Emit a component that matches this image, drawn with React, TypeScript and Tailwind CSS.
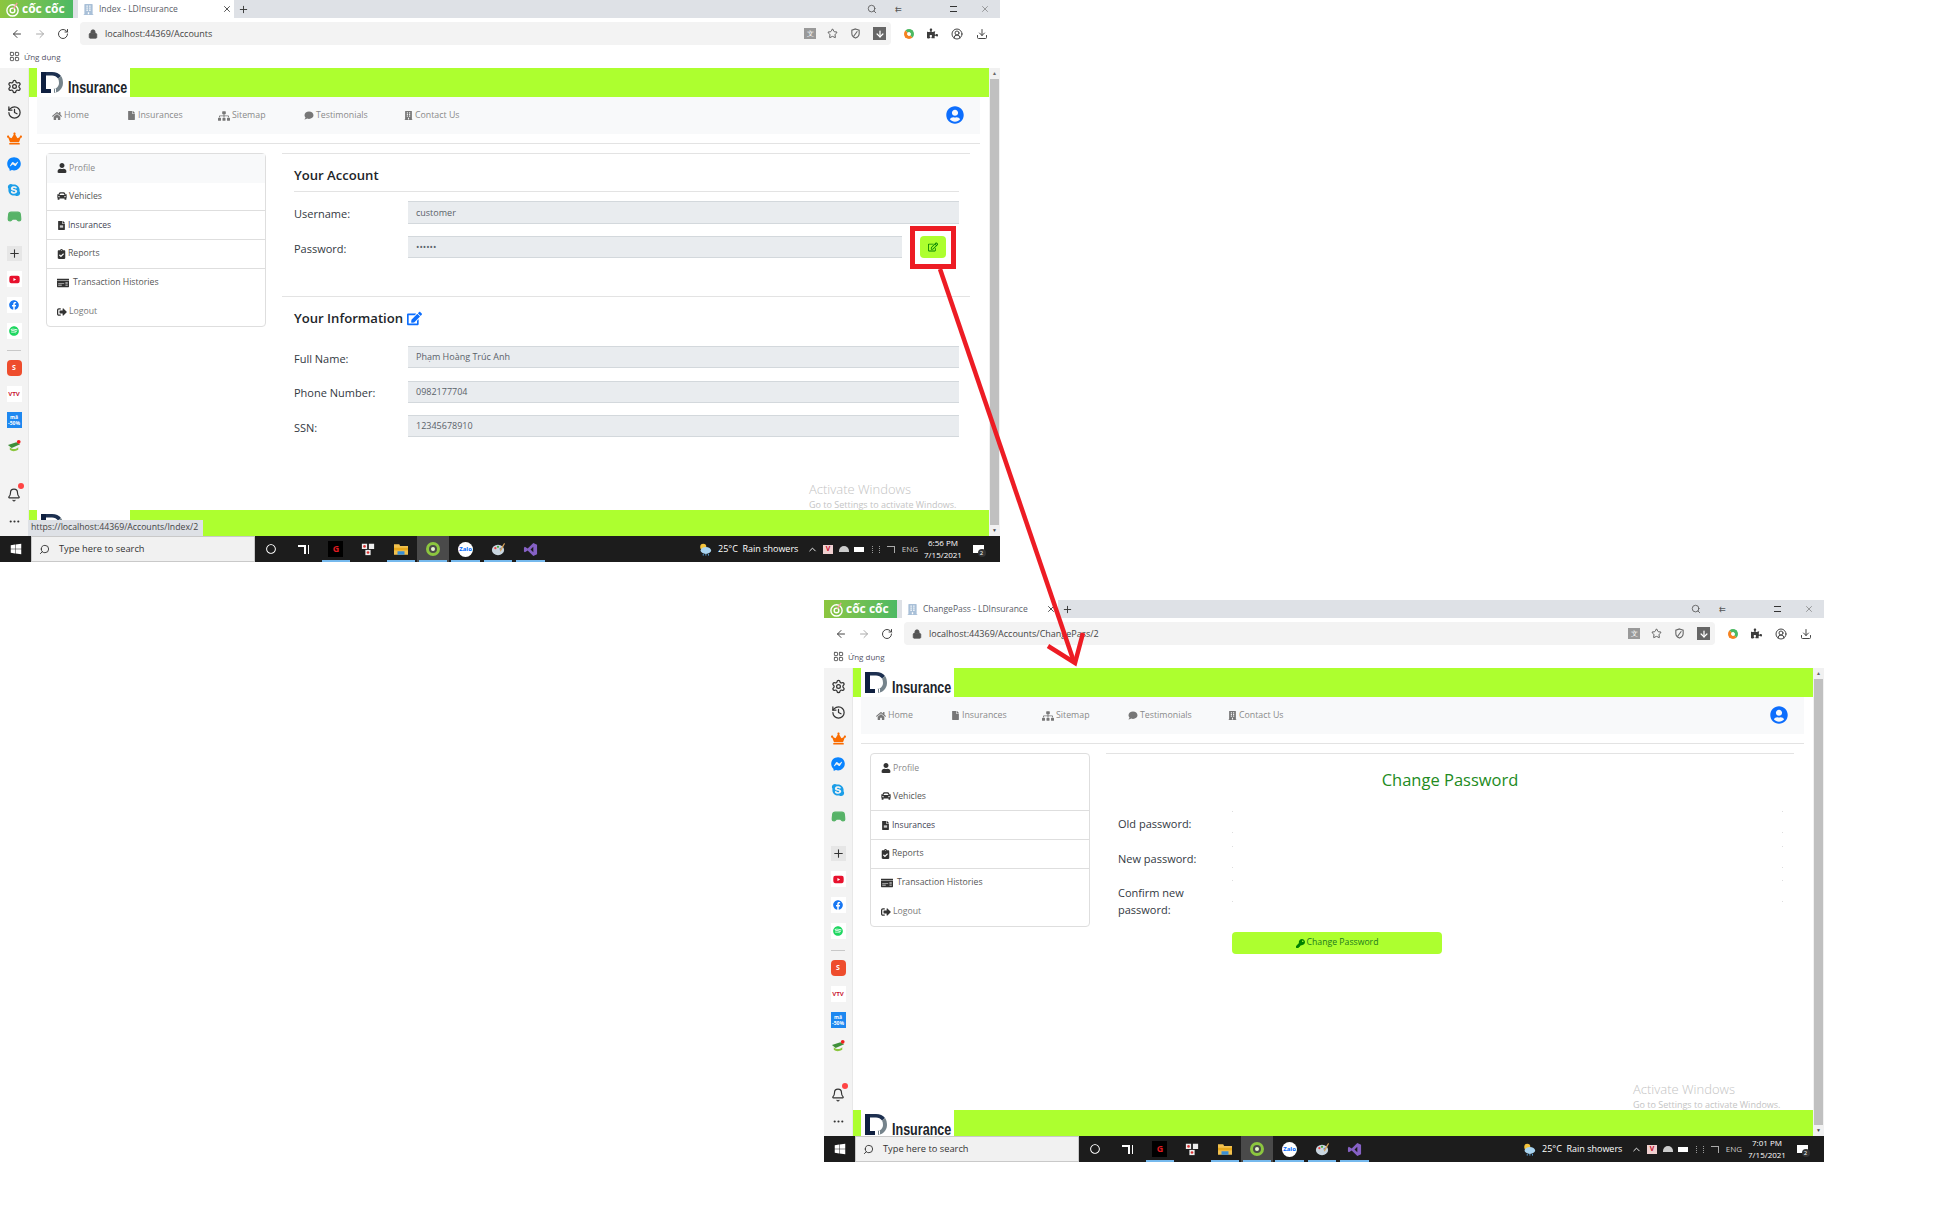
import type { ReactNode } from 'react'
import {
  ArrowLeft, ArrowRight, RotateCw, Lock, Star, Download, Search, Plus, X, Settings, History, Bell,
  MoreHorizontal, CircleUserRound, ChevronUp, LayoutGrid, Gamepad2,
} from 'lucide-react'
import {
  FaHome, FaFile, FaSitemap, FaComment, FaBuilding, FaUser, FaCar, FaFileAlt, FaClipboardCheck,
  FaMoneyCheck, FaSignOutAlt, FaEdit, FaKey, FaUserCircle, FaPuzzlePiece, FaCrown, FaFacebook,
  FaFacebookMessenger, FaSkype, FaSpotify, FaYoutube, FaWindows, FaRegEdit, FaRegCircle,
} from 'react-icons/fa'

function Logo() {
  return (
    <div className="flex h-[29px] w-[93px] shrink-0 items-start bg-white pl-1 pt-1">
      <svg viewBox="0 0 22 22" className="h-[22px] w-[22px] shrink-0">
        <path d="M0 0h5v17h5v4H0z" fill="#0f2040" />
        <path d="M5 0h6c4 0 7 1.500 9 4l-3 2.500C15.500 4.500 13.500 3.500 11 3.500H5z" fill="#1d3050" />
        <path d="M20 4c1.500 2 2 4.500 2 7 0 6-5 10-10 10v-4c3.500 0 6-2.800 6-6 0-1.700-.3-3.200-1-4.500z" fill="#76848c" />
        <path d="M12 17h1v4h-1zM14 16.500h1v4h-1z" fill="#ffffff" />
      </svg>
      <span className="mt-[5px] ml-[5px] origin-left scale-x-[0.76] font-['Liberation_Sans',sans-serif] text-[16.500px] leading-[20px] font-bold whitespace-nowrap text-[#20242a]">
        Insurance
      </span>
    </div>
  )
}

function LimeBar({ children }: { children?: ReactNode }) {
  return <div className="flex h-[29px] shrink-0 bg-[#adff2f] pl-2">{children}</div>
}

function CocCocBadge() {
  return (
    <div className="flex h-[18px] w-[73px] shrink-0 items-center gap-[2px] bg-gradient-to-r from-[#8cc63f] to-[#4cb963] pl-[5px]">
      <svg viewBox="0 0 16 16" className="h-[15px] w-[15px] shrink-0" fill="none" stroke="white" strokeWidth="1.5">
        <circle cx="8" cy="9" r="6" />
        <circle cx="8" cy="9" r="2.500" />
        <path d="M9 7l4-6" stroke="#f5a0a0" />
      </svg>
      <span className="text-[12px] leading-none font-bold whitespace-nowrap text-white">cốc cốc</span>
    </div>
  )
}

function TabStrip({ title }: { title: string }) {
  return (
    <div className="flex h-[18px] shrink-0 items-center bg-[#dee1e6]">
      <CocCocBadge />
      <div className="ml-[5px] flex h-[18px] w-[156px] shrink-0 items-center bg-white pl-[5px]">
        <FaBuilding className="h-[11px] w-[11px] text-[#a9c0d8]" />
        <span className="ml-[5px] flex-1 truncate text-[8.500px] text-[#5a6068]">{title}</span>
        <X className="mr-[2px] h-[10px] w-[10px] text-[#333]" />
      </div>
      <Plus className="ml-[4px] h-[11px] w-[11px] text-[#333]" />
      <div className="ml-auto flex items-center text-[#555]">
        <Search className="mr-[18px] h-[10px] w-[10px]" />
        <span className="mr-[48px] text-[8px] leading-none">⇇</span>
        <span className="mr-[23px] h-[6px] w-[7px] border-y border-[#333]" />
        <X className="mr-[10px] h-[10px] w-[10px]" strokeWidth={1.25} />
      </div>
    </div>
  )
}

function Toolbar({ url }: { url: string }) {
  return (
    <div className="flex h-[27px] shrink-0 items-center bg-white pt-[4px]">
      <ArrowLeft className="ml-[11px] h-[12px] w-[12px] text-[#444]" />
      <ArrowRight className="ml-[11px] h-[12px] w-[12px] text-[#aaa]" />
      <RotateCw className="ml-[11px] h-[12px] w-[12px] text-[#444]" />
      <div className="ml-[11px] flex h-[23px] w-[811px] items-center rounded-sm bg-[#f3f3f3] pl-[8px]">
        <Lock className="h-[10px] w-[10px] fill-[#555] text-[#555]" />
        <span className="ml-[7px] text-[9px] text-[#444]">{url}</span>
        <div className="ml-auto flex items-center pr-[5px] text-[#555]">
          <span className="flex h-[11px] w-[12px] items-center justify-center bg-[#999] text-[7px] leading-none text-white">文</span>
          <Star className="ml-[11px] h-[11px] w-[11px]" />
          <svg viewBox="0 0 12 12" className="ml-[12px] h-[11px] w-[11px]" fill="none" stroke="#666" strokeWidth="1.2">
            <path d="M6 1l4 1.400V6c0 2.600-1.800 4.200-4 5-2.200-.8-4-2.400-4-5V2.400zM8 3.500L4 9" />
          </svg>
          <span className="ml-[12px] flex h-[13px] w-[13px] items-center justify-center bg-[#666]">
            <ArrowRight className="h-[10px] w-[10px] rotate-90 text-white" strokeWidth={3} />
          </span>
        </div>
      </div>
      <span className="ml-[13px] h-[10px] w-[10px] rounded-full border-[3px] border-[#f58220] border-t-[#4cb963] border-r-[#4cb963]" />
      <FaPuzzlePiece className="ml-[13px] h-[11px] w-[11px] text-[#3c3c3c]" />
      <CircleUserRound className="ml-[13px] h-[12px] w-[12px] text-[#444]" />
      <Download className="ml-[13px] h-[12px] w-[12px] text-[#444]" />
    </div>
  )
}

function BookmarksBar() {
  return (
    <div className="flex h-[23px] shrink-0 items-center bg-white pl-[9px]">
      <LayoutGrid className="h-[11px] w-[11px] text-[#555]" />
      <span className="ml-[4px] text-[8px] text-[#556]">Ứng dụng</span>
    </div>
  )
}

function RailSlot({ children, chip }: { children: ReactNode; chip?: boolean }) {
  return (
    <div className="flex h-[26px] shrink-0 items-center justify-center">
      {chip ? <div className="flex h-[16px] w-[15px] items-center justify-center bg-white">{children}</div> : children}
    </div>
  )
}

function Rail() {
  return (
    <div className="flex w-[29px] shrink-0 flex-col border-r border-[#e8e8e8] bg-[#f3f3f3] pt-[5px]">
      <RailSlot><Settings className="h-[15px] w-[15px] text-[#333]" /></RailSlot>
      <RailSlot><History className="h-[15px] w-[15px] text-[#333]" /></RailSlot>
      <RailSlot><FaCrown className="h-[15px] w-[15px] text-[#f96b00]" /></RailSlot>
      <RailSlot><FaFacebookMessenger className="h-[14px] w-[14px] text-[#0a84ff]" /></RailSlot>
      <RailSlot><FaSkype className="h-[14px] w-[14px] text-[#1c9ee8]" /></RailSlot>
      <RailSlot><Gamepad2 className="h-[15px] w-[15px] fill-[#57b368] text-[#57b368]" /></RailSlot>
      <div className="mt-[11px]">
        <RailSlot>
          <span className="flex h-[15px] w-[15px] items-center justify-center bg-[#e6e6e6]">
            <Plus className="h-[13px] w-[13px] text-[#333]" />
          </span>
        </RailSlot>
      </div>
      <RailSlot chip><FaYoutube className="h-[11px] w-[11px] text-[#e8112d]" /></RailSlot>
      <RailSlot chip><FaFacebook className="h-[10px] w-[10px] text-[#1877f2]" /></RailSlot>
      <RailSlot chip><FaSpotify className="h-[10px] w-[10px] text-[#1ed760]" /></RailSlot>
      <div className="mx-[7px] mt-[6px] h-px bg-[#c8c8c8]" />
      <div className="mt-[4px]">
        <RailSlot>
          <span className="flex h-[16px] w-[15px] items-center justify-center rounded-sm bg-[#ee4d2d] text-[7px] font-bold text-white">S</span>
        </RailSlot>
      </div>
      <RailSlot>
        <span className="flex h-[16px] w-[15px] items-center justify-center bg-white font-['Liberation_Sans',sans-serif] text-[6px] font-bold text-[#c8102e]">VTV</span>
      </RailSlot>
      <RailSlot>
        <span className="flex h-[16px] w-[15px] items-center justify-center bg-[#1e88f0] text-center text-[5px] leading-[6px] font-bold text-white">mã -50%</span>
      </RailSlot>
      <RailSlot>
        <svg viewBox="0 0 16 14" className="h-[14px] w-[15px]">
          <path d="M1 6l9-3 4 2-9 4z" fill="#3f8f3a" />
          <path d="M3 8c2 3 7 3 9 0v3c-3 2-7 2-9 0z" fill="#8cc63f" />
          <circle cx="12.500" cy="2.500" r="2" fill="#f02020" />
        </svg>
      </RailSlot>
      <div className="mt-auto pb-[2px]">
        <div className="relative">
          <RailSlot><Bell className="h-[14px] w-[14px] text-[#333]" /></RailSlot>
          <span className="absolute top-[1px] left-[18px] h-[6px] w-[6px] rounded-full bg-[#f44]" />
        </div>
        <RailSlot><MoreHorizontal className="h-[13px] w-[13px] text-[#333]" /></RailSlot>
      </div>
    </div>
  )
}

function NavLink({ icon, label, width }: { icon: ReactNode; label: string; width: string }) {
  return (
    <span className={`flex items-center gap-[2px] text-[8.800px] text-[#8a8a8a] ${width}`}>
      <span className="text-[#777]">{icon}</span>
      {label}
    </span>
  )
}

function SiteNav() {
  return (
    <div className="mr-[9px] ml-2 flex h-[37px] shrink-0 items-center bg-[#f8f9fa] pl-[15px]">
      <NavLink width="w-[75px]" icon={<FaHome className="h-[10px] w-[10px]" />} label="Home" />
      <NavLink width="w-[91px]" icon={<FaFile className="h-[9px] w-[9px]" />} label="Insurances" />
      <NavLink width="w-[86px]" icon={<FaSitemap className="h-[10px] w-[12px]" />} label="Sitemap" />
      <NavLink width="w-[100px]" icon={<FaComment className="h-[9px] w-[10px]" />} label="Testimonials" />
      <NavLink width="w-[70px]" icon={<FaBuilding className="h-[9px] w-[9px]" />} label="Contact Us" />
      <FaUserCircle className="mr-[16px] mb-[2px] ml-auto h-[18px] w-[18px] text-[#0d6efd]" />
    </div>
  )
}

function MenuRow({ icon, label, active, line, labelClass }: { icon: ReactNode; label: string; active?: boolean; line?: boolean; labelClass?: string }) {
  return (
    <div className={`flex h-[28.660px] items-center gap-[2px] pl-[10px] text-[8.700px] text-[#555] ${active ? 'bg-[#f8f9fa]' : ''} ${line ? 'border-b border-[#dedede]' : ''}`}>
      <span className="text-[#333]">{icon}</span>
      <span className={labelClass}>{label}</span>
    </div>
  )
}

function SideMenu({ active }: { active?: boolean }) {
  return (
    <div className="h-[174px] w-[220px] shrink-0 rounded-sm border border-[#dedede] bg-white">
      <MenuRow active={active} icon={<FaUser className="h-[10px] w-[10px]" />} label="Profile" labelClass="text-[#8a8a8a]" />
      <MenuRow line icon={<FaCar className="h-[10px] w-[10px]" />} label="Vehicles" />
      <MenuRow line icon={<FaFileAlt className="h-[9px] w-[9px]" />} label="Insurances" labelClass="text-[8.500px] text-[#445]" />
      <MenuRow line icon={<FaClipboardCheck className="h-[10px] w-[9px]" />} label="Reports" />
      <MenuRow icon={<FaMoneyCheck className="h-[10px] w-[12px]" />} label="Transaction Histories" labelClass="ml-[2px]" />
      <MenuRow icon={<FaSignOutAlt className="h-[10px] w-[10px]" />} label="Logout" labelClass="text-[#777]" />
    </div>
  )
}

function Field({ label, value, height = 'h-[22px]' }: { label: string; value: string; height?: string }) {
  return (
    <div className="grid grid-cols-[114px_1fr] items-center">
      <span className="pt-[4px] text-[11px] text-[#33393f]">{label}</span>
      <div className={`flex items-center border-y border-[#d3d8dc] bg-[#e9ecef] pl-2 text-[9px] text-[#5a626a] ${height}`}>{value}</div>
    </div>
  )
}

function AccountPanel() {
  return (
    <div className="mr-[19px] ml-[16px] flex-1 border-t border-[#e3e3e3]">
      <div className="mr-[11px] pl-3">
        <h2 className="mt-[11px] h-[20px] text-[13.100px] leading-[20px] font-semibold text-[#212529]">Your Account</h2>
        <div className="mt-[6px] border-t border-[#e3e3e3]" />
        <div className="mt-[9px] flex h-[23px] items-stretch">
          <div className="flex-1"><Field label="Username:" value="customer" height="h-[23px]" /></div>
        </div>
        <div className="mt-[12px] flex items-start">
          <div className="flex-1"><Field label="Password:" value="••••••" /></div>
          <div className="relative mr-[13px] ml-[18px]">
            <button className="flex h-[22px] w-[26px] items-center justify-center rounded-sm bg-[#adff2f]">
              <FaRegEdit className="h-[10px] w-[10px] text-[#008000]" />
            </button>
            <div className="absolute -top-[10px] -right-[10px] -bottom-[11px] -left-[10px] border-[5px] border-[#ed1c24]" />
          </div>
        </div>
      </div>
      <div className="mt-[38px] border-t border-[#e3e3e3]">
        <div className="mr-[11px] pl-3">
          <h2 className="mt-[11px] flex h-[20px] items-center gap-1 text-[13.100px] leading-[20px] font-semibold text-[#212529]">
            Your Information
            <FaEdit className="h-[15px] w-[15px] text-[#0d6efd]" />
          </h2>
          <div className="mt-[18px] flex flex-col gap-[12.500px]">
            <Field label="Full Name:" value="Phạm Hoàng Trúc Anh" />
            <Field label="Phone Number:" value="0982177704" />
            <Field label="SSN:" value="12345678910" />
          </div>
        </div>
      </div>
    </div>
  )
}

function GhostField({ label, height = 'h-[22px]' }: { label: string; height?: string }) {
  return (
    <div className="grid grid-cols-[114px_1fr] items-start">
      <span className="pt-[4px] text-[11px] leading-[17px] text-[#33393f]">{label}</span>
      <div className={`flex flex-col justify-between ${height}`}>
        <div className="flex justify-between"><i className="h-px w-px bg-[#ddd]" /><i className="h-px w-px bg-[#ddd]" /></div>
        <div className="flex justify-between"><i className="h-px w-px bg-[#ddd]" /><i className="h-px w-px bg-[#ddd]" /></div>
      </div>
    </div>
  )
}

function ChangePasswordPanel() {
  return (
    <div className="mr-[19px] ml-[16px] flex-1 border-t border-[#e3e3e3]">
      <h2 className="mt-[14px] h-[24px] text-center text-[16.500px] leading-[24px] text-[#228b22]">Change Password</h2>
      <div className="mt-[19px] mr-[11px] flex flex-col gap-[12.500px] pl-3">
        <GhostField label="Old password:" />
        <GhostField label="New password:" />
        <GhostField label="Confirm new password:" />
      </div>
      <div className="mt-[14px] ml-[126px]">
        <button className="flex h-[22px] w-[210px] items-center justify-center gap-[2px] rounded-sm bg-[#adff2f] text-[8.700px] text-[#1c7a1c]">
          <FaKey className="h-[9px] w-[9px] text-[#008000]" />
          Change Password
        </button>
      </div>
    </div>
  )
}

function TaskApp({ active, on = true, children }: { active?: boolean; on?: boolean; children: ReactNode }) {
  return (
    <div className={`relative flex h-[26px] w-[32.400px] shrink-0 items-center justify-center ${active ? 'bg-[#4a4a4a]' : ''}`}>
      {children}
      {on && <span className="absolute inset-x-[2px] bottom-0 h-[2px] bg-[#76b9ed]" />}
    </div>
  )
}

function TrayCell({ width, children }: { width: string; children: ReactNode }) {
  return <span className={`flex shrink-0 items-center justify-center ${width}`}>{children}</span>
}

function Taskbar({ time }: { time: string }) {
  return (
    <div className="flex h-[26px] shrink-0 items-center bg-[#1c1c1c]">
      <div className="flex h-[26px] w-[31px] shrink-0 items-center justify-center">
        <FaWindows className="h-[12px] w-[12px] text-white" />
      </div>
      <div className="flex h-[26px] w-[224px] shrink-0 items-center border border-[#c9c9c9] bg-[#f1f1f1] pl-[7px]">
        <Search className="h-[11px] w-[11px] -scale-x-100 text-[#333]" />
        <span className="ml-[9px] text-[9.300px] text-[#333]">Type here to search</span>
      </div>
      <TaskApp on={false}><FaRegCircle className="h-[10px] w-[10px] text-white" /></TaskApp>
      <TaskApp on={false}>
        <span className="flex h-[9px] items-stretch gap-[2px]">
          <span className="w-[8px] border-t-2 border-r-2 border-white" />
          <span className="w-[1px] bg-white" />
        </span>
      </TaskApp>
      <TaskApp>
        <span className="flex h-[16px] w-[15px] items-center justify-center bg-black text-[9px] font-bold text-[#e01b22]">G</span>
      </TaskApp>
      <TaskApp on={false}>
        <svg viewBox="0 0 16 16" className="h-[14px] w-[14px]">
          <rect x="1" y="2" width="6" height="6" fill="#eee" />
          <rect x="9" y="2" width="6" height="6" fill="#eee" />
          <rect x="5" y="9" width="6" height="6" fill="#eee" />
          <circle cx="4" cy="5" r="1.500" fill="#d33" />
          <circle cx="8" cy="12" r="1.500" fill="#d33" />
        </svg>
      </TaskApp>
      <TaskApp>
        <svg viewBox="0 0 16 14" className="h-[13px] w-[14px]">
          <path d="M0 1h6l1 2h9v10H0z" fill="#f2c14e" />
          <path d="M0 5h16v3H0z" fill="#e8a91c" />
          <path d="M4 9h8v4H4z" fill="#3a8fd6" />
        </svg>
      </TaskApp>
      <TaskApp active>
        <span className="flex h-[14px] w-[14px] items-center justify-center rounded-full border-[3px] border-[#8cc63f]">
          <span className="h-[4px] w-[4px] rounded-full bg-[#e8f5d0]" />
        </span>
      </TaskApp>
      <TaskApp>
        <span className="flex h-[15px] w-[15px] items-center justify-center rounded-full bg-white text-[6px] font-bold text-[#0068ff]">Zalo</span>
      </TaskApp>
      <TaskApp>
        <svg viewBox="0 0 16 16" className="h-[14px] w-[14px]">
          <ellipse cx="8" cy="9" rx="7" ry="6" fill="#c9d6e0" />
          <circle cx="5" cy="7" r="1.300" fill="#e44" />
          <circle cx="8" cy="5.500" r="1.300" fill="#4a4" />
          <circle cx="11" cy="8" r="1.300" fill="#48d" />
          <path d="M10 9l5-8 1 1-5 9z" fill="#d8a35a" />
        </svg>
      </TaskApp>
      <TaskApp>
        <svg viewBox="0 0 16 16" className="h-[15px] w-[15px]">
          <path d="M11 1l4 2v10l-4 2-6-6-3 2-1-1V6l1-1 3 2zM11 5L8 8l3 3z" fill="#8661c5" />
        </svg>
      </TaskApp>
      <div className="ml-auto flex items-center pr-[6px] text-white">
        <TrayCell width="w-[16px]">
          <svg viewBox="0 0 16 14" className="h-[13px] w-[14px]">
            <circle cx="6" cy="4" r="3.500" fill="#f5c33b" />
            <ellipse cx="9" cy="8" rx="6" ry="4" fill="#a9d3ef" />
            <path d="M6 12v2M9 12v2M12 12v2" stroke="#5aa9e6" />
          </svg>
        </TrayCell>
        <span className="ml-[5px] w-[86px] text-[9px] whitespace-nowrap">25°C&nbsp; Rain showers</span>
        <TrayCell width="w-[16px]"><ChevronUp className="h-[11px] w-[11px]" /></TrayCell>
        <TrayCell width="w-[16px]">
          <span className="flex h-[9px] w-[10px] items-center justify-center bg-[#f0d0d0] text-[7px] font-bold text-[#c8102e]">V</span>
        </TrayCell>
        <TrayCell width="w-[15px]"><span className="h-[6px] w-[10px] rounded-t-full bg-[#ccc]" /></TrayCell>
        <TrayCell width="w-[16px]"><span className="h-[5px] w-[10px] bg-white" /></TrayCell>
        <TrayCell width="w-[17px]"><span className="h-[7px] w-[8px] border-x border-dotted border-[#999]" /></TrayCell>
        <TrayCell width="w-[14px]"><span className="h-[7px] w-[8px] border-t border-r border-[#aaa]" /></TrayCell>
        <TrayCell width="w-[24px]"><span className="text-[8px] text-[#ccc]">ENG</span></TrayCell>
        <span className="ml-[2px] flex w-[38px] flex-col items-center text-[8px] leading-[12px]">
          <span>{time}</span>
          <span>7/15/2021</span>
        </span>
        <TrayCell width="w-[32px]">
          <span className="relative h-[8px] w-[11px] bg-white">
            <span className="absolute top-[4px] left-[5px] flex h-[8px] w-[8px] items-center justify-center rounded-full bg-[#333] text-[6px]">2</span>
          </span>
        </TrayCell>
      </div>
    </div>
  )
}

function Scrollbar() {
  return (
    <div className="flex w-[11px] shrink-0 flex-col bg-[#f1f1f1]">
      <span className="flex h-[11px] items-center justify-center text-[5px] leading-none text-[#666]">▲</span>
      <div className="mx-[1px] flex-1 bg-[#c0c0c0]" />
      <span className="flex h-[11px] items-center justify-center text-[5px] leading-none text-[#444]">▼</span>
    </div>
  )
}

function BrowserWindow({ title, url, time, status, activeMenu, pos, children }: {
  title: string
  url: string
  time: string
  status?: string
  activeMenu?: boolean
  pos: string
  children: ReactNode
}) {
  return (
    <div className={`absolute flex h-[562px] w-[1000px] flex-col bg-white ${pos}`}>
      <TabStrip title={title} />
      <Toolbar url={url} />
      <BookmarksBar />
      <div className="relative flex min-h-0 flex-1">
        <Rail />
        <div className="flex min-w-0 flex-1 flex-col bg-white">
          <LimeBar><Logo /></LimeBar>
          <SiteNav />
          <div className="mt-[9px] mr-[9px] ml-2 border-t border-[#e3e3e3]" />
          <div className="mt-[9px] ml-[17px] flex min-h-0 flex-1">
            <SideMenu active={activeMenu} />
            {children}
          </div>
          <div className="h-[26px] shrink-0 overflow-hidden"><LimeBar><Logo /></LimeBar></div>
        </div>
        <Scrollbar />
        <div className="pointer-events-none absolute top-[413px] left-[809px] text-[#c4c4c4]">
          <p className="text-[13px] leading-[16px] font-light">Activate Windows</p>
          <p className="mt-[2px] text-[9px] leading-[12px]">Go to Settings to activate Windows.</p>
        </div>
        {status && (
          <div className="absolute bottom-0 left-[28px] flex h-[16px] items-center bg-[#dee1e6] pr-[5px] pl-[3px] text-[8.700px] text-[#444]">
            {status}
          </div>
        )}
      </div>
      <Taskbar time={time} />
    </div>
  )
}

export default function App() {
  return (
    <div className="relative h-[1228px] w-[1934px] overflow-hidden bg-white font-['Open_Sans',sans-serif]">
      <BrowserWindow
        pos="top-0 left-0"
        title="Index - LDInsurance"
        url="localhost:44369/Accounts"
        time="6:56 PM"
        status="https://localhost:44369/Accounts/Index/2"
        activeMenu
      >
        <AccountPanel />
      </BrowserWindow>
      <BrowserWindow
        pos="top-[600px] left-[824px]"
        title="ChangePass - LDInsurance"
        url="localhost:44369/Accounts/ChangePass/2"
        time="7:01 PM"
      >
        <ChangePasswordPanel />
      </BrowserWindow>
      <svg viewBox="0 0 1934 1228" className="pointer-events-none absolute inset-0 h-[1228px] w-[1934px]" fill="none" stroke="#ed1c24">
        <path d="M940 269L1074 662" strokeWidth="4.500" />
        <path d="M1048 646L1075 663L1083 633" strokeWidth="4.500" />
      </svg>
    </div>
  )
}
